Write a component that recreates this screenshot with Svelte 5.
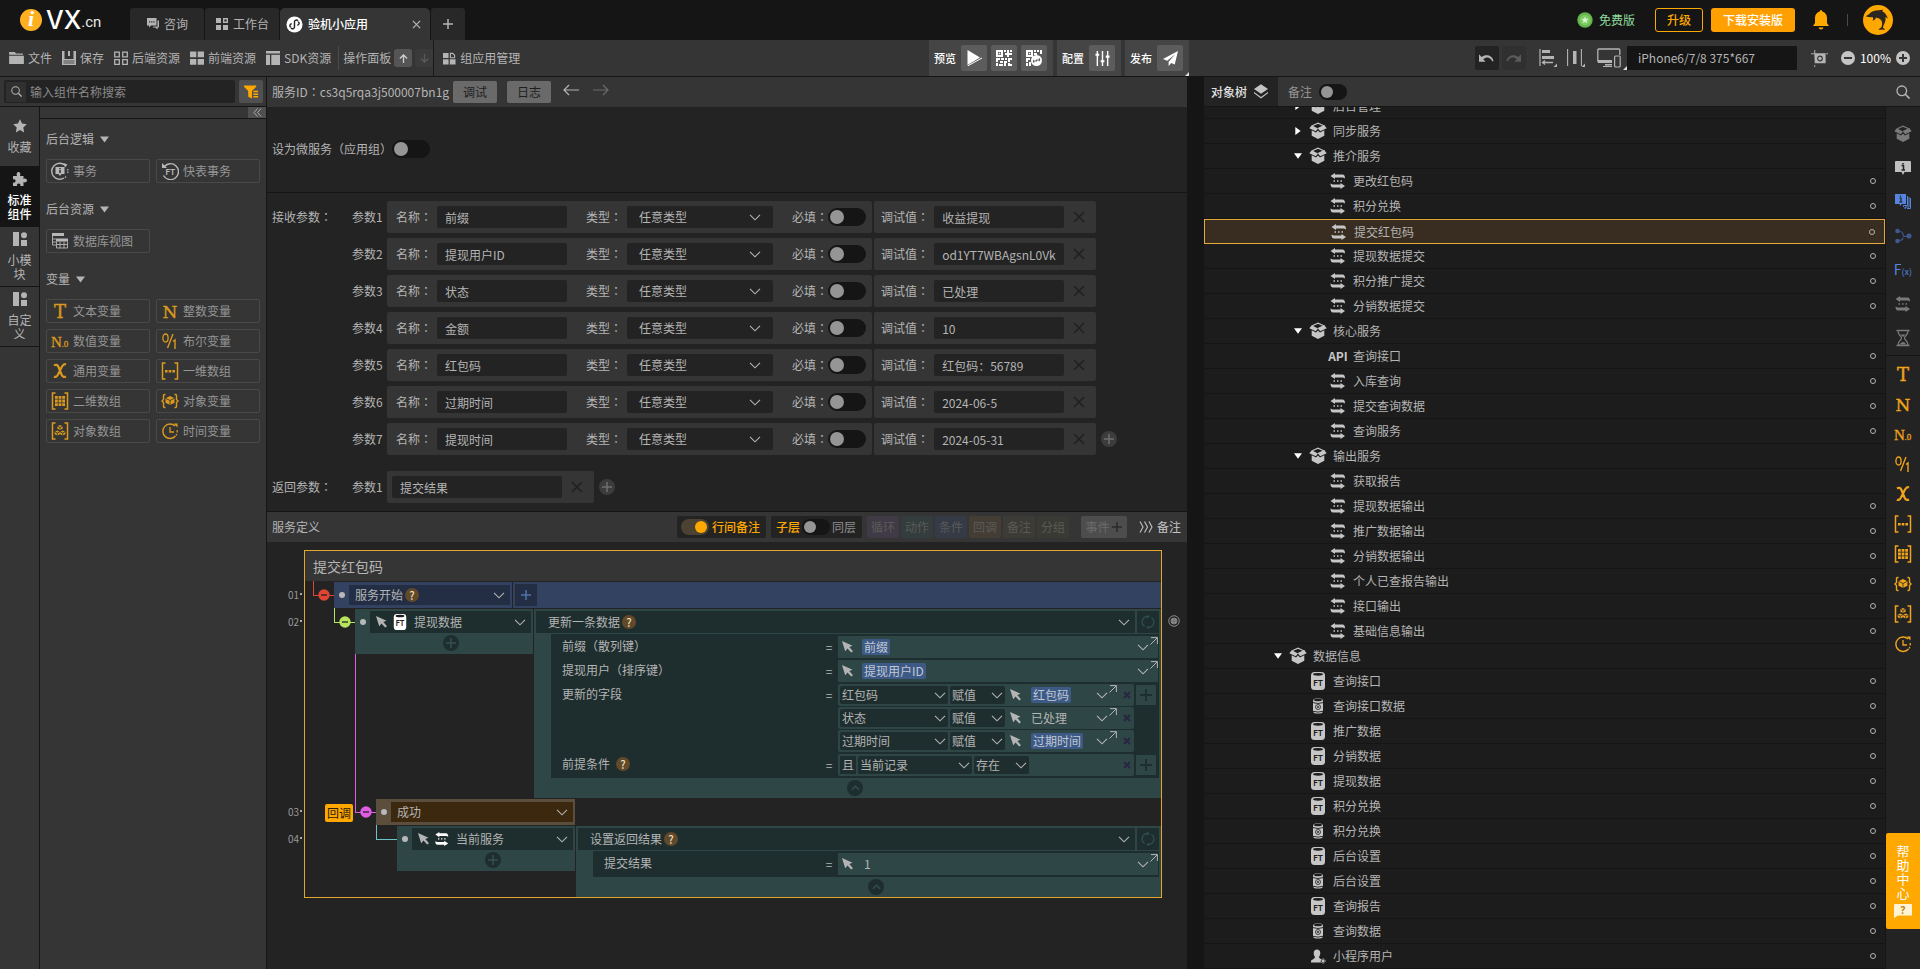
<script>
  const SERIF = `font-family="DejaVu Serif, Liberation Serif, serif" stroke="currentColor" stroke-width=".4"`;
  const NARROW = `font-family="Liberation Serif, serif" stroke="currentColor" stroke-width=".3"`;
  const SANS = `font-family="Noto Sans, sans-serif"`;
  const stroke = (w = 1) => `fill="none" stroke="currentColor" stroke-width="${w}"`;
  const brackets = `<path d="M4.500 1H1.500v16h3M13.500 1h3v16h-3" ${stroke(1.500)}/>`;
  const cube = (x, y, s) =>
    `<path d="M${x} ${y - s}l${s} ${s / 2}v${s}l-${s} ${s / 2}l-${s} -${s / 2}v-${s}z"/><path d="M${x - s} ${y - s / 2}l${s} ${s / 2}l${s} -${s / 2}M${x} ${y}v${s}" fill="none" stroke="#2b2b2b" stroke-width=".8"/>`;

  const icons = {
    chat: ['0 0 14 14', `<path d="M1 1h9.500v7.500H5L3 10.500V8.500H1z"/><path d="M11.500 3.500H13v7h-1.500v2l-2.300-2H6.500l1-1h4z"/><path d="M3 4.300h1.200v1.200H3zM5.200 4.300h1.200v1.200H5.200zM7.400 4.300h1.200v1.200H7.400z" fill="#282828"/>`],
    blocks: ['0 0 14 14', `<path d="M1 1h5v5H1zM1 8h5v5H1zM8 8h5v5H8z"/><path d="M8.700 1.700h3.600v3.600H8.700z" ${stroke(1.4)}/>`],
    mini: ['0 0 18 18', `<circle cx="9" cy="9" r="8.500" fill="#fff"/><path d="M5.500 11.800c-2-.3-2-3.300.6-3.600M9 6.200v5.400c0 2-2.700 2.600-3.600.9M12.500 6.200c2 .3 2 3.300-.6 3.600M9 11.600V6.200c0-2 2.700-2.600 3.600-.9" fill="none" stroke="#222" stroke-width="1.500"/>`],
    close: ['0 0 10 10', `<path d="M1 1l8 8M9 1L1 9" ${stroke(1.4)}/>`],
    cross: ['0 0 12 12', `<path d="M1 1l10 10M11 1L1 11" ${stroke(1.6)}/>`],
    fat: ['0 0 8 8', `<path d="M1 1l6 6M7 1L1 7" ${stroke(2)}/>`],
    plus: ['0 0 10 10', `<path d="M5 0v10M0 5h10" ${stroke(1.500)}/>`],
    folder: ['0 0 16 13', `<path d="M0 0h6l1.500 1.500H15V3H0zM0 4h16v9H0z"/>`],
    save: ['0 0 14 14', `<path d="M0 0h2.500v8h9V0H14v14H0z"/><path d="M6 0h2v5H6z"/><path d="M1.500 10h11M1.500 12h11" fill="none" stroke="#353535" stroke-width=".8"/>`],
    grid4: ['0 0 14 14', `<path d="M.7 1.200h4.600v4.600H.7zM8.700 1.200h4.600v4.600H8.700zM.7 8.700h4.600v4.600H.7zM8.700 8.700h4.600v4.600H8.700z" ${stroke(1.3)}/>`],
    grid4f: ['0 0 14 14', `<path d="M0 .500h6.300v5.800H0zM7.700 .500H14v5.800H7.700zM0 8h6.300v5.800H0zM7.700 8H14v5.800H7.700z"/>`],
    sdk: ['0 0 14 14', `<path d="M0 0h14v2.500H0zM0 3.800h4V14H0zM5.300 3.800H14V14H5.300z"/>`],
    group: ['0 0 14 14', `<path d="M0 1h6v5.500H0zM0 7.800h6V13.500H0zM7.300 7.800H13.500v5.700H7.300z"/><path d="M8 1.500h2.500l2 2v2.700H8z" ${stroke(1.200)}/>`],
    up: ['0 0 10 10', `<path d="M5 10V1M1 5l4-4 4 4" ${stroke(1.500)}/>`],
    down: ['0 0 10 10', `<path d="M5 0v9M1 5l4 4 4-4" ${stroke(1.500)}/>`],
    left: ['0 0 16 12', `<path d="M16 6H1M6 1L1 6l5 5" ${stroke(1.200)}/>`],
    right: ['0 0 16 12', `<path d="M0 6h15M10 1l5 5-5 5" ${stroke(1.200)}/>`],
    play: ['0 0 16 16', `<path d="M1.500 0L14 7.500 1.500 15z"/><path d="M1.500 16L16 8" stroke="currentColor" stroke-width="1"/>`],
    qr: ['0 0 16 16', `<path d="M1 1h5v5H1z" ${stroke(2)}/><path d="M8 0h2v2H8zM11 0h2v3h3v2h-3v2h-2V5H9V3h2zM14 0h2v2h-2zM0 8h4v2H2v2H0zM5 8h3v2H5zM9 8h2v2H9zM12 8h4v2h-2v2h-2zM4 11h3v2H4zM0 13h2v3H0zM3 14h4v2H3zM8 11h3v2h-1v3H8zM12 13h2v1h2v2h-4z"/><path d="M2.700 2.700h1.600v1.600H2.700z"/>`],
    qr2: ['0 0 16 16', `<path d="M1 1h5v5H1z" ${stroke(2)}/><path d="M8 0h2v2H8zM11 0h2v2h-2zM14 0h2v4h-2zM8 3h3v2H8zM0 8h4v2H2v2H0zM0 13h2v3H0zM3 12h2v4H3z"/><path d="M2.700 2.700h1.600v1.600H2.700z"/><circle cx="10.500" cy="10.500" r="5.500"/><path d="M8.300 12.400q-1.500-1 0-2.400M12.700 8.600q1.500 1 0 2.400M9.500 11.500l2-2" fill="none" stroke="#5c5c5c" stroke-width="1.400"/>`],
    sliders: ['0 0 16 16', `<path d="M2.500 0v16M8 0v16M13.500 0v16" ${stroke(1.500)}/><path d="M.500 4h4M6 11h4M11.500 6h4" ${stroke(2.200)}/>`],
    plane: ['0 0 16 16', `<path d="M16 0L0 8.500l4.500 2L13 3.500 6 11.500V16l2.800-3.300 3.700 1.800z"/>`],
    undo: ['0 0 16 10', `<path d="M0 1v8h7L4.500 6.300C8 3.500 12 4 14 8.500h1.500C14.500 2 7 .500 2.800 4z"/>`],
    redo: ['0 0 16 10', `<path d="M16 1v8H9l2.500-2.700C8 3.500 4 4 2 8.500H.500C1.500 2 9 .500 13.200 4z"/>`],
    align: ['0 0 18 18', `<path d="M1 0v17" ${stroke(1.200)}/><path d="M3 1h8v3H3zM3 7h12v3H3z"/><path d="M14 13.500H4M6 11.500l-2.500 2L6 15.500" ${stroke(1.300)}/><path d="M18 14.500V18h-3.500z"/>`],
    dist: ['0 0 18 18', `<path d="M.600 0v17M14.400 0v17" ${stroke(1.100)}/><path d="M6 2h3.500v13H6z"/><path d="M18 14.500V18h-3.500z"/>`],
    devices: ['0 0 26 20', `<path d="M15 14H1.800q-1 0-1-1V2q0-1 1-1h20q1 0 1 1v5" ${stroke(1.300)}/><path d="M1 12h14v3H1zM8 16h7v1.500H8zM6 18h9v1H6z"/><rect x="17.600" y="8" width="5.600" height="11" rx="1" ${stroke(1.200)}/>`],
    shot: ['0 0 18 18', `<path d="M4 0v4H0M4 16v2M16 4h2" ${stroke(1)}/><path d="M3.500 3.500h12V14H4z"/><circle cx="9.500" cy="9" r="2.500" fill="none" stroke="#353535" stroke-width="1.200"/>`],
    zoomOut: ['0 0 14 14', `<circle cx="7" cy="7" r="7"/><path d="M3 7h8" stroke="#353535" stroke-width="2"/>`],
    zoomIn: ['0 0 14 14', `<circle cx="7" cy="7" r="7"/><path d="M3 7h8M7 3v8" stroke="#353535" stroke-width="2"/>`],
    search: ['0 0 14 14', `<circle cx="5.800" cy="5.800" r="4.800" ${stroke(1.300)}/><path d="M9.300 9.300L13.500 13.500" ${stroke(1.600)}/>`],
    filter: ['0 0 16 14', `<path d="M0 0h13v1.500L8.500 6v8l-4-2V6L0 1.500z"/><path d="M10 6.500h5M10 9.300h5M10 12.100h5" ${stroke(1.600)}/>`],
    dbl: ['0 0 10 10', `<path d="M5 .500L1 5l4 4.500M9 .500L5 5l4 4.500" ${stroke(1)}/>`],
    star: ['0 0 14 14', `<path d="M7 .300l2 4.300 4.800.6-3.500 3.300.9 4.900L7 11.100l-4.200 2.300.9-4.900L.200 5.200 5 4.600z"/>`],
    puzzle: ['0 0 14 14', `<path d="M0 4h4c-1-2 0-4 1.500-4S8 2 7 4h3.500v3C12 6 14 7 14 8.500S12 11 10.500 10v4H7.300c.5-2-.3-2.600-1.500-2.600S3.700 12 4 14H0V10.500c2 .5 2.500-.5 2.500-1.700S1.500 7 0 7.500z"/>`],
    mod: ['0 0 14 14', `<path d="M0 0h6v14H0zM8 8h6v6H8z"/><circle cx="11" cy="3.300" r="3"/>`],
    tx: ['0 0 18 18', `<path d="M14 3.200A8 8 0 1 0 13 16" ${stroke(1.400)}/><path d="M12.500 1l4 1.500-2.500 3z"/><path d="M16.800 7v5M15 14.500l-1.500 1.500" ${stroke(1.200)} stroke-dasharray="1.500 1"/><path d="M4.500 5h9v7h-3L9 14l-1.500-2h-3z"/><path d="M9 6v1.300M9 8v3" stroke="#353535" stroke-width="1.600"/>`],
    fttx: ['0 0 18 18', `<path d="M3 5A8 8 0 1 1 2.500 13.500" ${stroke(1.400)}/><path d="M1 1v5h5z"/><text x="9.200" y="12.600" text-anchor="middle" font-size="9" font-weight="600" ${SANS}>FT</text>`],
    view: ['0 0 18 18', `<path d="M1 1h12v3H1zM5 6.500h12v3H5z"/><path d="M1 7h4M1 10h4M1.500 4v9H5M5.500 9.500V16H16.500V9.500M5.500 12.500h11M9 9.500V16M13 9.500V16" ${stroke(.9)}/>`],
    T: ['0 0 18 18', `<text x="9" y="15.500" text-anchor="middle" font-size="18" ${SERIF}>T</text>`],
    N: ['0 0 18 18', `<text x="9" y="15.500" text-anchor="middle" font-size="17" ${SERIF}>N</text>`],
    N0: ['0 0 18 18', `<text x="0" y="14.500" font-size="15" ${NARROW}>N</text><text x="10.500" y="14.500" font-size="9" ${NARROW}>.0</text>`],
    bool: ['0 0 18 18', `<ellipse cx="4.500" cy="6" rx="2.600" ry="4" ${stroke(1.300)}/><path d="M12 2L6.500 16M12 9.500l2-1.500v9" ${stroke(1.400)}/>`],
    chi: ['0 0 18 18', `<path d="M3 3.500q3-2 4.500 1.500l3 7.500q1.500 3.500 4.500 2M15 2.500q-2-1-4 2L7 12.500q-2 3.500-4 2" ${stroke(2.200)}/>`],
    arr1: ['0 0 18 18', brackets + `<path d="M4 8h2.600v2.600H4zM7.700 8h2.600v2.600H7.700zM11.400 8H14v2.600h-2.600z"/>`],
    arr2: ['0 0 18 18', brackets + `<path d="M4 4h2.800v2.800H4zM7.600 4h2.800v2.800H7.600zM11.200 4H14v2.800h-2.800zM4 7.600h2.800v2.800H4zM7.600 7.600h2.800v2.800H7.600zM11.200 7.600H14v2.800h-2.800zM4 11.200h2.800V14H4zM7.600 11.200h2.800V14H7.600zM11.200 11.200H14V14h-2.800z"/>`],
    obj: ['0 0 18 18', `<path d="M4.500 2.500H3.500q-1 0-1 1V7.500L1 9l1.500 1.500v4q0 1 1 1h1M13.500 2.500h1q1 0 1 1V7.500L17 9l-1.500 1.500v4q0 1-1 1h-1" ${stroke(1.400)}/>` + cube(9, 8.500, 4.500)],
    objarr: ['0 0 18 18', brackets + cube(9, 5.500, 2.600) + cube(6.300, 11, 2.600) + cube(11.700, 11, 2.600)],
    time: ['0 0 18 18', `<path d="M14 4A7.200 7.200 0 1 0 14.500 14" ${stroke(1.400)}/><path d="M16.200 8v2.500M15.800 12l-.8 1.500M9 5v5h4" ${stroke(1.300)}/><path d="M12.500 1.500h4v4z"/>`],
    box: ['0 0 18 18', `<path d="M3.200 3.800L9 1.200l5.800 2.600L9 6.500" ${stroke(1.100)}/><path d="M2.700 3.300L9 6.400 6.800 9.200.300 6.200zM15.300 3.300L9 6.400l2.200 2.800 6.500-3zM2.700 8.200l4.300 2.200L9 8.600l2 1.800 4.300-2.200v5.500L9 17l-6.300-3.300z"/>`],
    swap: ['0 0 18 18', `<path d="M1.500 4L6 1v1.500h7.500q2.500 0 2.500 4l-2-1H6V7zM16 14l-4.500 3v-1.500H4q-2.500 0-2.500-4l2 1h8V11z"/><path d="M4.500 8.200h1.500v1.500H4.500zM8 8.200h1.500v1.500H8zM11.500 8.200H13v1.500h-1.500z"/>`],
    ft: ['0 0 18 18', `<rect x="2" y="0" width="14" height="18" rx="3.500"/><ellipse cx="9" cy="2.300" rx="5" ry="1.400" fill="#1c1c1c"/><text x="9" y="13.600" text-anchor="middle" font-size="9" font-weight="600" fill="#1c1c1c" ${SANS}>FT</text>`],
    db: ['0 0 18 18', `<rect x="4" y="1.500" width="10" height="15" rx="3"/><ellipse cx="9" cy="3" rx="4" ry="1.200" fill="#1c1c1c"/><path d="M3.500 5.500q5.500 2 11 0M3.500 14.200q5.500 1.800 11 0" fill="none" stroke="#1c1c1c" stroke-width=".9"/><circle cx="9" cy="10" r="2.500" fill="none" stroke="#1c1c1c" stroke-width=".8"/><circle cx="9" cy="10" r=".9" fill="#1c1c1c"/>`],
    user: ['0 0 18 18', `<path d="M8 2.500c2 0 3.300 1.300 3.300 3.500 0 2-.8 3-1.300 4 .3 1.500 1.500 1.800 2.500 2.500-1 1-1 1.800-.6 3H2v-1.500c.5-1.500 3.700-1.800 4-4-.6-1-1.300-2-1.300-4C4.700 3.800 6 2.500 8 2.500z"/><circle cx="14" cy="14" r="2" ${stroke(1)} stroke-dasharray="1.200 .5"/><circle cx="14" cy="14" r="1.200"/>`],
    layers: ['0 0 16 18', `<path d="M8 0l8 5.500L8 11 0 5.500z"/><path d="M1 9.500l-.5.500L8 15.500l7.500-5.500-.5-.500" ${stroke(1.400)}/>`],
    cursor: ['0 0 12 13', `<path d="M0 0l11.500 5L8 6.500l4 4.500-2 1.500-4-4.500L3.500 11z"/>`],
    chev: ['0 0 12 7', `<path d="M1 .800l5 5 5-5" ${stroke(1.100)}/>`],
    chevUp: ['0 0 10 6', `<path d="M1 5l4-4 4 4" ${stroke(1.500)}/>`],
    ext: ['0 0 8 8', `<path d="M1 .600h6.400V7M7 1L.500 7.500" ${stroke(1)}/>`],
    refresh: ['0 0 14 14', `<path d="M3.500 11.500A5.500 5.500 0 0 1 7 1.500M10.500 2.500A5.500 5.500 0 0 1 7 12.500" ${stroke(1.300)}/><path d="M6 0l3 1.600L6 3.500zM8 10.700v3.300l-3-1.600z"/>`],
    minus: ['0 0 12 12', `<circle cx="6" cy="6" r="5.700"/><path d="M3 6h6" stroke="#232323" stroke-width="1.300"/>`],
    target: ['0 0 12 12', `<circle cx="6" cy="6" r="5.300" ${stroke(1)}/><circle cx="6" cy="6" r="3.300"/><path d="M6 0v12M0 6h12" stroke="#555" stroke-width=".5"/>`],
    note: ['0 0 18 18', `<path d="M2 2h14q1 0 1 1v10h-6.500L9 16l-1.500-3H1V3q0-1 1-1z"/><path d="M7.500 6.500h2V11M7.500 11h3.500M9 4v1.300" fill="none" stroke="#232323" stroke-width="1.500"/>`],
    notes: ['0 0 18 18', `<path d="M1 1h11v10H7.500L6.500 13l-1-2H1z"/><path d="M13.500 3v9.500H9.500v1.500M15 4v10h-4v2M16.500 5v10.500h-3.500" ${stroke(1)}/><path d="M5.500 5h1.500v4M5 9h3.500M6.500 2.500v1.300" fill="none" stroke="#232323" stroke-width="1.200"/>`],
    branch: ['0 0 18 18', `<circle cx="3.500" cy="4" r="2.300"/><circle cx="3.500" cy="14" r="2.300"/><circle cx="15" cy="9" r="2.500"/><path d="M5 4.500q4 0 4 3t4 1.500M5 13.500q4 0 4-3" ${stroke(1.200)}/>`],
    hourglass: ['0 0 18 18', `<path d="M2.500 1.500h13M2.500 16.500h13" ${stroke(1.600)}/><path d="M4 2c0 4 3.500 5 3.500 7S4 12 4 16h10c0-4-3.500-5-3.500-7S14 6 14 2" ${stroke(1.200)}/><path d="M6 15q3-4 6 0zM6.500 5.500h5L9 8z"/>`],
    bell: ['0 0 16 20', `<path d="M8 0q1.300 0 1.300 1.500C12.500 2.300 14 5 14 8v5l2 3H0l2-3V8c0-3 1.500-5.700 4.700-6.500Q6.700 0 8 0zM5.500 17.500h5Q10 19.500 8 19.500t-2.500-2z"/>`],
    medal: ['0 0 16 16', `<circle cx="8" cy="8" r="7.700" fill="#62b84c"/><circle cx="8" cy="8" r="5.300" fill="#7fcb66"/><path d="M8 4.500l1 2.300 2.500.2-1.900 1.700.6 2.500L8 9.900l-2.200 1.300.6-2.500L4.500 7 7 6.800z" fill="#d6f5c8"/>`],
    help: ['0 0 18 14', `<path d="M1 0h16q1 0 1 1v10.500H4L0 14V1q0-1 1-1z" fill="#fff3d6"/><text x="9" y="9.800" text-anchor="middle" font-size="10" font-weight="700" fill="#c57f00" ${SANS}>?</text>`],
    dolphin: ['0 0 30 30', `<circle cx="15" cy="15" r="15" fill="#ffa800"/><path d="M2.500 11.200c1.500-.8 2.800-1.200 4.200-2.700C9 6 13 5 16 5.200c1.500-.2 2.500-.7 4-.5l-.8 1.500c3 1.500 4.600 3.800 5.600 7.300-1-.2-1.700-.8-2.400-1.700.6 3.200-.3 5.700-1.900 8.700l-.5 2.500c1 .3 1.700 1 2 2-1.500-.5-2.500-.7-3.600-.3-1 .2-2 .2-3-.5 1.200-.6 2.200-1 3-1.900.8-2.500 1.200-4.500.2-6.300-1.300-2-3.300-3-5.600-3.400-.3 1.600-1.600 2.700-3.500 3.200.7-1.200.8-2.200.4-3.600C7.500 12.500 5 12 2.500 11.200z" fill="#2a2620"/>`],
    arrows3: ['0 0 14 12', `<path d="M1 .500L4 6 1 11.500M5.500 .500l3 5.500-3 5.500M10 .500L13 6l-3 5.500" ${stroke(1.100)}/>`],
    bpt: ['0 0 12 8', `<path d="M0 0h12L6 8z"/>`],
  };

  const railTabs = [
    { icon: 'star', label: '收藏' },
    { icon: 'puzzle', label: '标准组件', active: true },
    { icon: 'mod', label: '小模块' },
    { icon: 'mod', label: '自定义' },
  ];

  const groups = [
    { title: '后台逻辑', items: [['tx', '事务'], ['fttx', '快表事务']] },
    { title: '后台资源', items: [['view', '数据库视图']] },
    {
      title: '变量', gold: true,
      items: [['T', '文本变量'], ['N', '整数变量'], ['N0', '数值变量'], ['bool', '布尔变量'], ['chi', '通用变量'],
        ['arr1', '一维数组'], ['arr2', '二维数组'], ['obj', '对象变量'], ['objarr', '对象数组'], ['time', '时间变量']],
    },
  ];

  const params = [
    ['前缀', '收益提现'], ['提现用户ID', 'od1YT7WBAgsnL0VkuPq8'], ['状态', '已处理'], ['金额', '10'],
    ['红包码', '红包码：56789'], ['过期时间', '2024-06-5'], ['提现时间', '2024-05-31'],
  ];

  const chips = [['循环', '#3f3a45'], ['动作', '#343d3d'], ['条件', '#343b47'], ['回调', '#433d34'], ['备注', '#3d3b35'], ['分组', '#3a3a34']];

  const fields = [['红包码', '红包码', true], ['状态', '已处理', false], ['过期时间', '过期时间', true]];

  const svc = (label, dot = true) => ({ lv: 2, icon: 'swap', label, dot });
  const data = (icon, label) => ({ lv: 1, icon, label, dot: true });
  const tree = [
    { lv: 1, caret: 'r', icon: 'box', label: '后台管理' },
    { lv: 1, caret: 'r', icon: 'box', label: '同步服务' },
    { lv: 1, caret: 'd', icon: 'box', label: '推介服务' },
    svc('更改红包码'), svc('积分兑换'), { ...svc('提交红包码'), sel: true }, svc('提现数据提交'), svc('积分推广提交'), svc('分销数据提交'),
    { lv: 1, caret: 'd', icon: 'box', label: '核心服务' },
    { lv: 2, icon: 'api', label: '查询接口', dot: true }, svc('入库查询'), svc('提交查询数据'), svc('查询服务'),
    { lv: 1, caret: 'd', icon: 'box', label: '输出服务' },
    svc('获取报告', false), svc('提现数据输出'), svc('推广数据输出'), svc('分销数据输出'), svc('个人已查报告输出'), svc('接口输出'), svc('基础信息输出'),
    { lv: 0, caret: 'd', icon: 'box', label: '数据信息' },
    data('ft', '查询接口'), data('db', '查询接口数据'), data('ft', '推广数据'), data('ft', '分销数据'), data('ft', '提现数据'), data('ft', '积分兑换'),
    data('db', '积分兑换'), data('ft', '后台设置'), data('db', '后台设置'), data('ft', '查询报告'), data('db', '查询数据'), data('user', '小程序用户'),
  ];

  const sideTop = [['box', 'dim', '对象组'], ['note', 'light', '备注'], ['notes', 'azure', '多重备注'], ['branch', 'navy', '分支'], ['fx', 'azure', '函数'], ['swap', 'dim', '服务'], ['hourglass', 'dim', '定时']];
  const sideVars = ['T', 'N', 'N0', 'bool', 'chi', 'arr1', 'arr2', 'obj', 'objarr', 'time'];
</script>

{#snippet icon(name, w, h = w)}
  <svg class="ico" viewBox={icons[name][0]} width={w} height={h} fill="currentColor" aria-hidden="true">{@html icons[name][1]}</svg>
{/snippet}

{#snippet zh(text)}<span>{#each text.split(/([：（）])/) as part}{#if /^[：（）]$/.test(part)}<span class="pt">{part}</span>{:else}{part}{/if}{/each}</span>{/snippet}

{#snippet drop(label, cls, value)}
  <span class="drop {cls}">
    <select aria-label={label}><option>{value}</option></select>
    {@render icon('chev', 12, 7)}
  </span>
{/snippet}

{#snippet toggle(label, small = false, on = false)}
  <input class="toggle" class:small type="checkbox" role="switch" aria-label={label} checked={on} />
{/snippet}

{#snippet q()}<button class="q" aria-label="说明">?</button>{/snippet}

<div class="app">
  <header class="top">
    <a class="logo" href="#home" aria-label="iVX.cn"><i>i</i><b>VX</b><span>.cn</span></a>
    <nav class="tabs">
      <button class="tab">{@render icon('chat', 14)}咨询</button>
      <button class="tab">{@render icon('blocks', 14)}工作台</button>
      <div class="tab current">{@render icon('mini', 17)}<span>验机小应用</span><button class="x" aria-label="关闭">{@render icon('close', 9)}</button></div>
      <button class="tab add" aria-label="新建">{@render icon('plus', 10)}</button>
    </nav>
    <div class="account">
      <span class="plan">{@render icon('medal', 16)}免费版</span>
      <button class="upgrade">升级</button>
      <button class="download">下载安装版</button>
      <button class="bell" aria-label="通知">{@render icon('bell', 16, 20)}</button>
      <span class="vr"></span>
      <button aria-label="账户">{@render icon('dolphin', 30)}</button>
    </div>
  </header>

  <div class="bar">
    <div class="barleft">
      <div class="menu">
        <button>{@render icon('folder', 15, 12)}文件</button>
        <button>{@render icon('save', 14)}保存</button>
        <button>{@render icon('grid4', 14)}后端资源</button>
        <button>{@render icon('grid4f', 14)}前端资源</button>
        <button>{@render icon('sdk', 14)}SDK资源</button>
        <span class="panelctl"><span>操作面板</span><button class="sq" aria-label="上移">{@render icon('up', 9)}</button><button class="sq off" aria-label="下移">{@render icon('down', 9)}</button></span>
        <button class="manage">{@render icon('group', 13)}组应用管理</button>
      </div>
      <div class="runs">
        <div class="run">预览<button aria-label="播放">{@render icon('play', 16)}</button><button aria-label="二维码">{@render icon('qr', 16)}</button><button aria-label="小程序码">{@render icon('qr2', 16)}</button></div>
        <div class="run">配置<button aria-label="配置">{@render icon('sliders', 15)}</button></div>
        <div class="run corner">发布<button aria-label="发布">{@render icon('plane', 15)}</button></div>
      </div>
    </div>
    <div class="barright">
      <button class="hist" aria-label="撤销">{@render icon('undo', 15, 10)}</button>
      <button class="hist off" aria-label="重做">{@render icon('redo', 15, 10)}</button>
      <button class="al" aria-label="对齐">{@render icon('align', 18)}</button>
      <button class="di" aria-label="分布">{@render icon('dist', 18)}</button>
      <div class="device corner"><span>{@render icon('devices', 26, 20)}</span></div>
      <select class="phone" aria-label="设备"><option>iPhone6/7/8 375*667</option></select>
      <button class="shot" aria-label="截图">{@render icon('shot', 17)}</button>
      <div class="zoom"><button aria-label="缩小">{@render icon('zoomOut', 14)}</button>100%<button aria-label="放大">{@render icon('zoomIn', 14)}</button></div>
    </div>
  </div>

  <div class="work">
    <aside class="left">
      <div class="find">
        <label><span>{@render icon('search', 11)}</span><input placeholder="输入组件名称搜索" aria-label="输入组件名称搜索" /></label>
        <button aria-label="筛选">{@render icon('filter', 15, 14)}</button>
      </div>
      <div class="leftbody">
        <nav class="rail">
          {#each railTabs as t}
            <button class:active={t.active}>{@render icon(t.icon, 14)}<span>{t.label}</span></button>
          {/each}
        </nav>
        <div class="comps">
          <div class="fold"><button aria-label="收起">{@render icon('dbl', 9)}</button></div>
          {#each groups as g}
            <section>
              <h2>{g.title}{@render icon('bpt', 9, 7)}</h2>
              <div class="cgrid">
                {#each g.items as [ic, label]}
                  <button class:gold={g.gold}>{@render icon(ic, 18)}{label}</button>
                {/each}
              </div>
            </section>
          {/each}
        </div>
      </div>
    </aside>

    <main>
      <div class="svcbar">
        <span class="sid">{@render zh('服务ID：cs3q5rqa3j500007bn1g')}</span>
        <button class="gray">调试</button><button class="gray">日志</button>
        <button class="nav" aria-label="后退">{@render icon('left', 16, 12)}</button><button class="nav off" aria-label="前进">{@render icon('right', 16, 12)}</button>
      </div>
      <div class="micro">{@render zh('设为微服务（应用组）')}{@render toggle('设为微服务')}</div>
      <div class="params">
        <div class="plist">
          {#each params as [name, val], i}
            <div class="prow">
              <span class="sec">{#if i === 0}{@render zh('接收参数：')}{/if}</span><span class="pno">参数{i + 1}</span>
              <div class="pbox main">
                <label class="fld">{@render zh('名称：')}<input type="text" value={name} /></label>
                <span class="fld">{@render zh('类型：')}{@render drop('类型', 'type', '任意类型')}</span>
                <span class="req">{@render zh('必填：')}{@render toggle('必填')}</span>
              </div>
              <div class="pbox dbg">
                <label class="fld">{@render zh('调试值：')}<input type="text" value={val} /></label>
                <button class="del" aria-label="删除">{@render icon('cross', 12)}</button>
              </div>
              {#if i === params.length - 1}<button class="rnd" aria-label="添加参数">{@render icon('plus', 10)}</button>{/if}
            </div>
          {/each}
        </div>
        <div class="prow">
          <span class="sec">{@render zh('返回参数：')}</span><span class="pno">参数1</span>
          <div class="pbox ret">
            <input class="wide" type="text" value="提交结果" aria-label="返回参数1" />
            <button class="del" aria-label="删除">{@render icon('cross', 12)}</button>
          </div>
          <button class="rnd" aria-label="添加返回参数">{@render icon('plus', 10)}</button>
        </div>
      </div>

      <div class="defbar">
        <span>服务定义</span>
        <div class="deftools">
          <span class="pill hot">{@render toggle('行间备注', true, true)}行间备注</span>
          <span class="pill"><em>子层</em>{@render toggle('子层或同层', true)}<span class="same">同层</span></span>
          <div class="chips">
            {#each chips as [label, bg]}<button style:background={bg}>{label}</button>{/each}
          </div>
          <button class="evt">事件{@render icon('plus', 10)}</button>
          <button class="more">{@render icon('arrows3', 14, 12)}备注</button>
        </div>
      </div>

      <div class="flow">
        <h1>提交红包码</h1>

        <div class="frow r1">
          <span class="ln">01</span>
          <span class="link red"><span>{@render icon('minus', 12)}</span></span>
          <div class="node blue grow">
            <span class="dot"></span>
            <div class="cell"><span>服务开始</span>{@render q()}{@render icon('chev', 12, 7)}</div>
            <span class="split"></span>
            <button class="sqadd" aria-label="添加">{@render icon('plus', 10)}</button>
          </div>
        </div>

        <div class="frow r2">
          <span class="ln">02</span>
          <span class="link lime"><span>{@render icon('minus', 12)}</span></span>
          <div class="stack">
            <div class="obj">
              <div class="node green"><span class="dot"></span>
                <div class="cell objcell">{@render icon('cursor', 11, 12)}<span class="white">{@render icon('ft', 16)}</span><span>提现数据</span>{@render icon('chev', 12, 7)}</div>
              </div>
              <button class="rnd dk" aria-label="添加">{@render icon('plus', 10)}</button>
            </div>
            <div class="pinkline"></div>
          </div>
          <div class="act">
            <div class="acthead"><div class="cell"><span>更新一条数据</span>{@render q()}{@render icon('chev', 12, 7)}</div><button class="ref" aria-label="刷新">{@render icon('refresh', 14)}</button></div>
            <div class="args">
              {#each [['前缀（散列键）', '前缀'], ['提现用户（排序键）', '提现用户ID']] as [k, v]}
                <div class="arg">{@render zh(k)}<span class="eq">=</span>
                  <div class="val">{@render icon('cursor', 11, 12)}<mark>{v}</mark><span class="tail">{@render icon('chev', 12, 7)}<span class="ext">{@render icon('ext', 8)}</span></span></div>
                </div>
              {/each}
              <div class="arg"><span>更新的字段</span><span class="eq">=</span>
                <div class="fieldset">
                  {#each fields as [k, v, chip], i}
                    <div class="fline">
                      <div class="fbox">
                        {@render drop('字段', 'f1', k)}{@render drop('操作', 'f2', '赋值')}
                        {@render icon('cursor', 11, 12)}{#if chip}<mark>{v}</mark>{:else}<span class="plain">{v}</span>{/if}
                        <span class="tail">{@render icon('chev', 12, 7)}<span class="ext">{@render icon('ext', 8)}</span><button class="fx" aria-label="删除">{@render icon('fat', 8)}</button></span>
                      </div>
                      {#if i === 0}<button class="fadd" aria-label="添加">{@render icon('plus', 12)}</button>{/if}
                    </div>
                  {/each}
                </div>
              </div>
              <div class="arg"><span class="withq">前提条件{@render q()}</span><span class="eq">=</span>
                <div class="fline">
                  <div class="fbox"><span class="and">且</span>{@render drop('对象', 'f3', '当前记录')}{@render drop('条件', 'f2', '存在')}<span class="tail"><button class="fx" aria-label="删除">{@render icon('fat', 8)}</button></span></div>
                  <button class="fadd" aria-label="添加">{@render icon('plus', 12)}</button>
                </div>
              </div>
            </div>
            <div class="foot"><button class="rnd dk" aria-label="收起">{@render icon('chevUp', 9, 6)}</button></div>
          </div>
          <span class="bp">{@render icon('target', 12)}</span>
        </div>

        <div class="frow r3">
          <span class="ln">03</span>
          <span class="tag">回调</span>
          <span class="link pink"><span>{@render icon('minus', 12)}</span></span>
          <div class="node brown"><span class="dot"></span><div class="cell"><span>成功</span>{@render icon('chev', 12, 7)}</div></div>
        </div>

        <div class="frow r4">
          <span class="ln">04</span>
          <span class="link cyan"></span>
          <div class="stack">
            <div class="obj">
              <div class="node green"><span class="dot"></span>
                <div class="cell objcell">{@render icon('cursor', 11, 12)}<span class="white">{@render icon('swap', 16)}</span><span>当前服务</span>{@render icon('chev', 12, 7)}</div>
              </div>
              <button class="rnd dk" aria-label="添加">{@render icon('plus', 10)}</button>
            </div>
          </div>
          <div class="act">
            <div class="acthead"><div class="cell"><span>设置返回结果</span>{@render q()}{@render icon('chev', 12, 7)}</div><button class="ref" aria-label="刷新">{@render icon('refresh', 14)}</button></div>
            <div class="args">
              <div class="arg"><span>提交结果</span><span class="eq">=</span>
                <div class="val">{@render icon('cursor', 11, 12)}<span class="plain">1</span><span class="tail">{@render icon('chev', 12, 7)}<span class="ext">{@render icon('ext', 8)}</span></span></div>
              </div>
            </div>
            <div class="foot"><button class="rnd dk" aria-label="收起">{@render icon('chevUp', 9, 6)}</button></div>
          </div>
        </div>
      </div>
    </main>

    <aside class="right">
      <div class="treehead">
        <span class="ttab">对象树{@render icon('layers', 14, 16)}</span>
        <span class="tnote">备注{@render toggle('备注', true)}</span>
        <button aria-label="搜索">{@render icon('search', 14)}</button>
      </div>
      <div class="treebody">
        <ul>
          {#each tree as n}
            <li class="lv{n.lv}" class:sel={n.sel}>
              <span class="caret" class:open={n.caret === 'd'}>{#if n.caret}{@render icon('bpt', 8, 6)}{/if}</span>
              <span class="tic">{#if n.icon === 'api'}<b>API</b>{:else}{@render icon(n.icon, 18)}{/if}</span>
              <span class="name">{n.label}</span>
              {#if n.dot}<span class="ring"></span>{/if}
            </li>
          {/each}
        </ul>
        <nav class="side">
          <div class="s1">
            {#each sideTop as [ic, tone, label]}
              <button class={tone} aria-label={label}>{#if ic === 'fx'}<span class="fxt">F<small>(x)</small></span>{:else}{@render icon(ic, 18)}{/if}</button>
            {/each}
          </div>
          <div class="s2">
            {#each sideVars as ic}<button aria-label={ic}>{@render icon(ic, 18)}</button>{/each}
          </div>
          <button class="helpc"><span>帮助中心</span>{@render icon('help', 18, 14)}</button>
        </nav>
      </div>
    </aside>
  </div>
</div>

<style>
  :global(body) { background: #151515; overflow: hidden; }
  .app, .app * { box-sizing: border-box; }
  .app { height: 100vh; display: flex; flex-direction: column; background: #151515; color: #b4b4b4; font: 12px/16px "Noto Sans CJK SC", "Noto Sans", sans-serif; }
  button, input, select { font: inherit; color: inherit; background: none; border: 0; padding: 0; margin: 0; outline: none; }
  button { display: flex; align-items: center; justify-content: center; white-space: nowrap; cursor: pointer; }
  h1, h2, ul { margin: 0; padding: 0; font-weight: 400; list-style: none; }
  .ico { display: block; flex: none; }
  .pt { font-family: "Noto Sans CJK TC", "Noto Sans CJK SC", sans-serif; }

  .top { height: 40px; flex: none; display: flex; align-items: stretch; }
  .logo { width: 130px; padding-left: 20px; display: flex; align-items: center; color: #fff; text-decoration: none; }
  .logo i { width: 22px; height: 22px; border-radius: 50%; background: #ffb020; font: italic 700 22px/20px "Liberation Serif", serif; text-align: center; margin-right: 4px; }
  .logo b { font: 500 25px/24px Inter, sans-serif; }
  .logo span { font: 15px/24px Roboto, sans-serif; padding-top: 4px; color: #e8e8e8; }
  .tabs { display: flex; align-items: flex-end; gap: 1px; }
  .tab { height: 32px; width: 74px; display: flex; align-items: center; justify-content: center; gap: 4px; background: #282828; border-radius: 3px 3px 0 0; }
  .tab.current { width: 150px; background: #353535; color: #fff; font-weight: 500; border-radius: 5px 5px 0 0; justify-content: flex-start; padding-left: 6px; gap: 5px; }
  .tab .x { margin-left: auto; margin-right: 9px; color: #b4b4b4; }
  .tab.add { width: 34px; }
  .account { margin-left: auto; display: flex; align-items: center; padding-right: 27px; }
  .plan { display: flex; align-items: center; gap: 6px; color: #8fdc9c; margin-right: 20px; }
  .upgrade, .download { height: 24px; border-radius: 3px; }
  .upgrade { width: 48px; border: 1px solid #ffa800; color: #ffa800; margin-right: 8px; font-weight: 500; }
  .download { width: 84px; background: #ffa000; color: #fff; font-weight: 500; margin-right: 18px; }
  .bell { color: #ffa800; }
  .vr { width: 1px; height: 12px; background: #4a4a4a; margin: 0 15px 0 18px; }

  .bar { height: 37px; flex: none; border-bottom: 1px solid #151515; background: #353535; display: grid; grid-template-columns: minmax(0, 1189fr) minmax(0, 731fr); }
  .barleft, .menu, .runs, .run, .barright, .panelctl { display: flex; align-items: center; }
  .barleft { justify-content: space-between; }
  .menu { gap: 10px; padding-left: 9px; align-self: stretch; }
  .menu button { gap: 4px; }
  .panelctl { gap: 3px; margin-left: -3px; border-left: 1px solid #4a4a4a; padding-left: 4px; height: 24px; }
  .panelctl .sq { width: 18px; height: 18px; border-radius: 3px; background: #555; color: #ccc; }
  .panelctl .sq.off { background: #3b3b3b; color: #5a5a5a; }
  .menu .manage { align-self: stretch; border-left: 1px solid #1a1a1a; margin-left: -10px; padding-left: 9px; }
  .runs { gap: 4px; align-self: stretch; }
  .run { align-self: stretch; background: #454545; padding: 0 6px 0 5px; gap: 4px; color: #fff; font-weight: 500; font-size: 11px; }
  .run button { width: 26px; height: 26px; background: #5c5c5c; border-radius: 2px; }
  .run button:first-of-type { margin-left: 1px; }
  .corner { position: relative; }
  .corner::after { content: ""; position: absolute; right: 0; bottom: 0; border: 2px solid transparent; border-right-color: #ddd; border-bottom-color: #ddd; }
  .barright { justify-content: flex-end; padding-right: 10px; }
  .hist { width: 24px; height: 24px; border-radius: 2px; background: #232323; margin-right: 3px; }
  .hist.off { background: #303030; color: #5a5a5a; margin-right: 13px; }
  .al { margin-right: 10px; }
  .di { margin-right: 12px; }
  .device { padding-right: 4px; height: 24px; display: flex; align-items: center; }
  .phone { width: 170px; height: 24px; background: #151515; appearance: none; padding-left: 11px; margin-right: 14px; }
  .shot { margin-right: 13px; }
  .zoom { display: flex; align-items: center; gap: 5px; color: #fff; }
  .zoom button { color: #c4c4c4; }

  .work { flex: 1; min-height: 0; display: grid; grid-template-columns: 267px minmax(0, 920fr) 17px minmax(0, 716fr); }
  .left { display: flex; flex-direction: column; background: #353535; border-right: 1px solid #151515; min-height: 0; }
  .find { height: 30px; display: flex; gap: 4px; padding: 3px 3px 3px 4px; border-bottom: 1px solid #151515; }
  .find label { flex: 1; background: #232323; border-radius: 2px; display: flex; align-items: center; padding: 2px; }
  .find label span { width: 20px; height: 20px; background: #303030; display: flex; align-items: center; justify-content: center; }
  .find input { flex: 1; min-width: 0; padding-left: 4px; }
  .find input::placeholder { color: #8a8a8a; }
  .find button { width: 24px; background: #505050; border-radius: 2px; color: #ffa800; }
  .leftbody { flex: 1; display: flex; min-height: 0; }
  .rail { width: 40px; border-right: 1px solid #151515; }
  .rail button { width: 100%; height: 60px; flex-direction: column; gap: 7px; border-bottom: 1px solid #151515; line-height: 14px; white-space: normal; }
  .rail span { width: 26px; text-align: center; }
  .rail .active { background: #151515; color: #fff; font-weight: 500; }
  .rail .active :global(svg) { color: #b4b4b4; }
  .comps { flex: 1; }
  .fold { height: 12px; border-bottom: 1px solid #151515; display: flex; justify-content: flex-end; }
  .fold button { width: 18px; background: #505050; }
  section { padding: 12px 6px 0; }
  section + section { padding-top: 18px; }
  h2 { font-size: 12px; line-height: 16px; display: flex; align-items: center; gap: 6px; margin-bottom: 12px; }
  .cgrid { display: grid; grid-template-columns: 1fr 1fr; gap: 6px; }
  .cgrid button { height: 24px; border: 1px solid #494949; border-radius: 2px; justify-content: flex-start; padding-left: 4px; gap: 4px; color: #969696; }
  .cgrid button :global(svg) { color: #b8b8b8; }
  .cgrid button.gold :global(svg) { color: #d99a1e; }

  main { background: #232323; min-width: 0; overflow: hidden; }
  .svcbar { height: 30px; background: #353535; display: flex; align-items: center; padding-left: 5px; }
  .sid { width: 181px; white-space: nowrap; }
  .gray { width: 44px; height: 22px; background: #6a6a6a; color: #1f1f1f; border-radius: 2px; margin-right: 10px; }
  .nav { width: 16px; margin: 0 14px 4px 2px; }
  .nav.off { color: #6a6a6a; margin-left: 0; }
  .micro { height: 86px; border-bottom: 1px solid #151515; display: flex; align-items: center; padding: 0 0 2px 5px; }
  .toggle { appearance: none; flex: none; width: 38px; height: 18px; border-radius: 9px; background: #151515; padding: 2px; display: flex; cursor: pointer; }
  .toggle::before { content: ""; width: 14px; height: 14px; border-radius: 50%; background: #959595; }
  .toggle.small { width: 28px; height: 16px; }
  .toggle.small::before { width: 12px; height: 12px; }
  .toggle:checked { background: #4c4233; justify-content: flex-end; }
  .toggle:checked::before { background: #ffa800; }
  .params { padding: 8px 0 8px 5px; display: flex; flex-direction: column; gap: 16px; border-bottom: 1px solid #151515; }
  .plist { display: flex; flex-direction: column; gap: 5px; }
  .prow { display: flex; align-items: center; height: 32px; }
  .sec { width: 80px; flex: none; }
  .pno { width: 35px; flex: none; white-space: nowrap; }
  .pbox { height: 32px; background: #353535; border-radius: 2px; display: flex; align-items: center; white-space: nowrap; flex: none; }
  .pbox.main { padding: 0 6px 0 9px; gap: 19px; margin-right: 2px; }
  .pbox.dbg { padding: 0 2px 0 7px; }
  .pbox.ret { padding: 0 2px 0 5px; }
  .fld { display: flex; align-items: center; gap: 5px; }
  .req { display: flex; align-items: center; }
  .pbox input[type="text"] { width: 130px; height: 22px; background: #232323; border-radius: 2px; padding: 0 8px; }
  .pbox input.wide { width: 170px; }
  .del { width: 30px; height: 22px; color: #202020; }
  .rnd { width: 16px; height: 16px; border-radius: 50%; background: #3c3c3c; color: #6e6e6e; margin-left: 5px; flex: none; }
  .rnd.dk { background: #1e2e2e; color: #35504f; margin: 0; }
  .obj .rnd.dk { margin-left: 14px; }
  .drop { position: relative; display: flex; align-items: center; background: #232323; border-radius: 2px; flex: none; }
  .drop select { appearance: none; width: 100%; height: 100%; cursor: pointer; }
  .drop :global(svg) { position: absolute; right: 2px; pointer-events: none; }
  .drop.type { width: 146px; height: 22px; }
  .drop.type select { padding-left: 12px; }
  .drop.type :global(svg) { right: 12px; }

  .defbar { height: 30px; background: #353535; display: flex; align-items: center; justify-content: space-between; padding: 0 6px 0 5px; white-space: nowrap; }
  .deftools, .chips, .pill { display: flex; align-items: center; }
  .pill { height: 22px; background: #232323; border-radius: 2px; padding: 0 6px 0 4px; gap: 3px; margin-right: 5px; }
  .pill + .pill { gap: 2px; padding-left: 5px; }
  .pill em, .hot { color: #ffa800; font-style: normal; font-weight: 500; }
  .same { color: #8e8e8e; }
  .chips { gap: 2px; }
  .chips button { width: 32px; height: 22px; border-radius: 2px; color: #5a5a58; }
  .evt { width: 46px; height: 22px; background: #4d4d4d; color: #6b6b6b; border-radius: 2px; gap: 3px; margin: 0 12px; }
  .evt :global(svg) { color: #2b2b2b; }
  .more { gap: 4px; color: #c4c4c4; }

  .flow { margin: 8px 25px 0 37px; border: 1px solid #e3a52c; }
  h1 { height: 31px; background: #353535; border-bottom: 1px solid #232323; font-size: 14px; line-height: 30px; padding-left: 8px; }
  .frow { position: relative; display: flex; align-items: flex-start; margin-bottom: 1px; }
  .r4 { margin-bottom: 0; }
  .r1 { padding-left: 8px; }
  .r2 { padding-left: 29px; }
  .r3 { padding-left: 20px; }
  .r4 { padding-left: 71px; }
  .ln { position: absolute; left: -17px; top: 7px; width: 15px; font-size: 10px; line-height: 12px; color: #999; }
  .ln::after { content: ""; position: absolute; right: 1px; top: 4px; width: 2px; height: 2px; background: #aaa; }
  .link { position: relative; flex: none; width: 21px; height: 15px; margin-top: -1px; border-left: 1px solid; border-bottom: 1px solid; }
  .link span { position: absolute; left: 4px; top: 8px; }
  .red { color: #e04434; }
  .lime { color: #b6e45c; }
  .pink { color: #e05ce4; }
  .cyan { color: #69c6c8; }
  .node { display: flex; align-items: center; padding-left: 5px; gap: 4px; height: 26px; }
  .grow { flex: 1; }
  .blue { background: #324260; }
  .green { background: #2e4746; width: 178px; }
  .brown { background: #5b4e3c; width: 199px; }
  .dot { width: 6px; height: 6px; border-radius: 50%; background: #b8b8b8; flex: none; }
  .cell { display: flex; align-items: center; height: 22px; background: #1e2e2e; padding-left: 6px; padding-right: 5px; width: 161px; }
  .cell > :global(svg:last-child) { margin-left: auto; }
  .blue .cell { background: #232e45; height: 20px; }
  .brown .cell { background: #3c280e; height: 20px; width: 182px; }
  .split { width: 1px; align-self: stretch; background: #232323; margin: 0 -2px; }
  .sqadd { width: 22px; height: 22px; background: #232e45; color: #5273a8; }
  .q { display: inline-flex; width: 14px; height: 14px; border-radius: 50%; background: #61492a; color: #f0e0c0; font-size: 11px; line-height: 14px; font-weight: 500; margin-left: 2px; }
  .withq { display: flex; align-items: center; gap: 4px; }
  .tag { width: 28px; height: 18px; line-height: 18px; background: #ffa800; color: #2b2007; border-radius: 2px; text-align: center; margin: 5px 2px 0 0; flex: none; }
  .stack { display: flex; flex-direction: column; align-self: stretch; margin-right: 1px; flex: none; }
  .obj { height: 45px; background: #2e4746; display: flex; flex-direction: column; align-items: center; }
  .objcell .white { color: #fff; margin: 0 6px 0 5px; }
  .pinkline { flex: 1; border-left: 1px solid #e05ce4; }
  .act { flex: 1; min-width: 0; background: #2e4746; padding: 2px 2px 0; }
  .acthead { display: flex; gap: 2px; }
  .acthead .cell { flex: 1; padding-left: 12px; }
  .ref { width: 22px; height: 22px; background: #1e2e2e; color: #2e4f4c; }
  .args { margin: 1px 0 0 15px; background: #1e2e2e; padding: 2px 1px 2px 11px; display: flex; flex-direction: column; gap: 2px; }
  .arg { display: grid; grid-template-columns: minmax(0, 1fr) 18px 320px; line-height: 20px; align-items: start; }
  .eq { text-align: center; line-height: 22px; }
  .val { height: 22px; background: #2e4746; display: flex; align-items: center; padding-left: 4px; }
  mark { background: #3d5a87; color: #c0c8d4; border-radius: 2px; line-height: 16px; padding: 0 2px; margin-left: 9px; }
  .plain { margin-left: 11px; }
  .tail { margin-left: auto; display: flex; align-items: center; gap: 1px; align-self: stretch; }
  .ext { align-self: flex-start; padding-top: 1px; }
  .fieldset { display: flex; flex-direction: column; gap: 1px; }
  .fline { display: flex; gap: 2px; }
  .fbox { width: 296px; height: 22px; background: #2e4746; border-radius: 2px; display: flex; align-items: center; padding: 0 3px 0 2px; gap: 2px; }
  .fbox .drop { height: 18px; background: #1e2e2e; line-height: 18px; }
  .fbox .drop select { padding-left: 2px; }
  .f1 { width: 108px; }
  .f2 { width: 55px; }
  .f3 { width: 114px; }
  .fbox > :global(svg) { margin-left: 3px; }
  .fbox mark, .fbox .plain { margin-left: 8px; line-height: 16px; }
  .fx { width: 8px; margin-left: 5px; color: #2a2540; }
  .fadd { width: 20px; height: 20px; margin-top: 1px; background: #2e4746; color: #1e2e2e; }
  .and { width: 16px; height: 18px; line-height: 18px; background: #1e2e2e; text-align: center; }
  .foot { height: 20px; display: flex; align-items: center; justify-content: center; padding-left: 15px; }
  .bp { position: absolute; right: -19px; top: 6px; color: #8c8c8c; }

  .right { grid-column: 4; display: flex; flex-direction: column; min-height: 0; background: #1c1c1c; }
  .treehead { height: 30px; flex: none; background: #353535; border-bottom: 1px solid #151515; display: flex; align-items: stretch; padding-right: 10px; }
  .ttab { width: 74px; background: #232323; padding-left: 7px; display: flex; align-items: center; gap: 7px; color: #e0e0e0; font-weight: 500; }
  .ttab :global(svg) { color: #c4c4c4; }
  .tnote { padding-left: 10px; display: flex; align-items: center; gap: 7px; color: #959595; }
  .treehead button { margin-left: auto; }
  .treebody { flex: 1; min-height: 0; display: flex; }
  ul { flex: 1; overflow: hidden; border-right: 1px solid #151515; }
  li { height: 25px; border-bottom: 1px solid #151515; display: flex; align-items: center; padding-right: 9px; }
  li:first-child { margin-top: -13px; }
  .sel { background: #382d20; border: 1px solid #e3a93c; }
  .lv0 { padding-left: 68px; }
  .lv1 { padding-left: 88px; }
  .lv2 { padding-left: 108px; }
  .caret { width: 12px; height: 12px; display: flex; align-items: center; justify-content: center; color: #fff; transform: rotate(-90deg); margin-right: 5px; }
  .caret.open { transform: none; }
  .tic { width: 18px; display: flex; justify-content: center; margin-right: 6px; color: #c6c6c6; }
  .tic b { font-size: 12px; font-weight: 700; }
  .ring { width: 6px; height: 6px; border: 1px solid #b4b4b4; border-radius: 50%; margin-left: auto; }
  .side { width: 34px; background: #232323; display: flex; flex-direction: column; }
  .side button { width: 100%; height: 34px; }
  .s1 { padding-top: 10px; border-bottom: 1px solid #151515; }
  .s2 { padding-top: 3px; color: #f0a41c; }
  .side .s2 button { height: 30px; }
  .dim { color: #7a7a7a; }
  .light { color: #c0c0c0; }
  .azure { color: #5585dc; }
  .navy { color: #3f5890; }
  .fxt { font-size: 14px; }
  .fxt small { font-size: 9px; }
  .side .helpc { height: 96px; margin-top: auto; margin-bottom: 40px; background: #ffa800; color: #fff; flex-direction: column; gap: 4px; border-radius: 2px 0 0 2px; }
  .helpc span { width: 14px; white-space: normal; font-size: 13px; line-height: 14px; }
</style>
